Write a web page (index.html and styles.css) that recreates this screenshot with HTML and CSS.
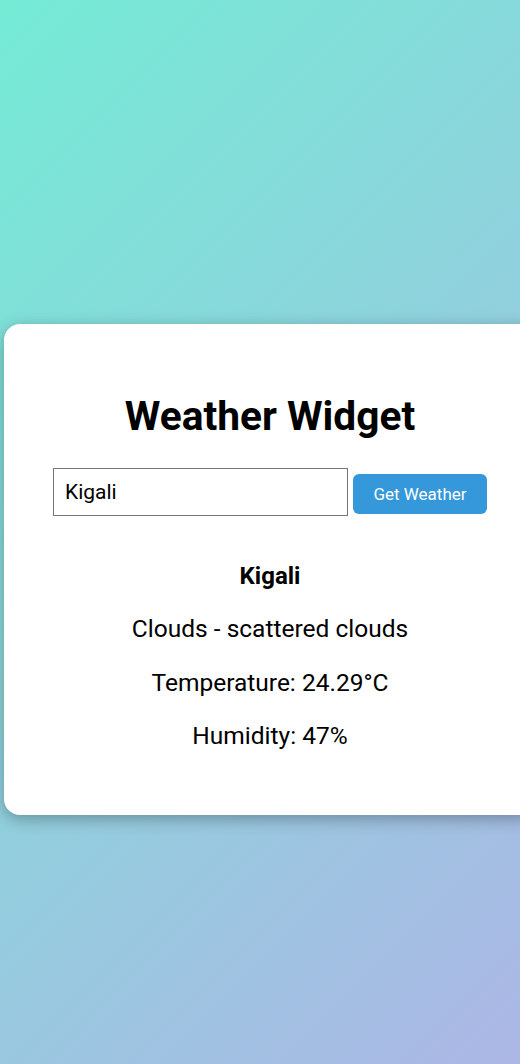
FILE: index.html
```html
<!DOCTYPE html>
<html lang="en">
<head>
<meta charset="utf-8">
<title>Weather Widget</title>
<link rel="stylesheet" href="styles.css">
</head>
<body>
<div class="widget">
  <h1 class="title">Weather Widget</h1>
  <div class="search">
    <input class="city-input" type="text" value="Kigali">
    <button class="fetch-btn">Get Weather</button>
  </div>
  <div class="result">
    <p class="city">Kigali</p>
    <p class="line">Clouds - scattered clouds</p>
    <p class="line">Temperature: 24.29°C</p>
    <p class="line">Humidity: 47%</p>
  </div>
</div>
</body>
</html>
```

FILE: styles.css
```css
html, body {
  margin: 0;
  padding: 0;
}
body {
  min-height: 1064px;
  overflow: hidden;
  background: linear-gradient(135deg, #74ebd5, #acb6e5);
  font-family: Roboto, "Liberation Sans", sans-serif;
  color: #000;
  padding-top: 324px;
  box-sizing: border-box;
}
.widget {
  box-sizing: border-box;
  width: 532px;
  margin-left: 4px;
  background: #fff;
  border-radius: 16px;
  padding: 68px 48px 52px;
  box-shadow: 0 4px 16px rgba(0, 0, 0, 0.3);
  text-align: center;
}
.title {
  margin: 0 0 28px;
  font-size: 40.7px;
  font-weight: 700;
  line-height: 48px;
}
.search {
  display: flex;
  justify-content: center;
  align-items: center;
  gap: 5px;
}
.city-input {
  box-sizing: border-box;
  width: 295px;
  height: 48px;
  border: 1px solid #767676;
  padding: 0 11px;
  font-family: Roboto, "Liberation Sans", sans-serif;
  font-size: 21px;
  color: #000;
  outline: none;
  margin-top: 0;
}
.fetch-btn {
  box-sizing: border-box;
  width: 134px;
  height: 40px;
  margin-top: 4px;
  border: none;
  border-radius: 6px;
  background: #3498db;
  color: #fff;
  font-family: Roboto, "Liberation Sans", sans-serif;
  font-size: 17px;
}
.result {
  margin-top: 34px;
}
.city {
  margin: 0;
  font-size: 24px;
  font-weight: 700;
  line-height: 52px;
}
.line {
  margin: 0;
  font-size: 24.5px;
  line-height: 53.5px;
}
```
